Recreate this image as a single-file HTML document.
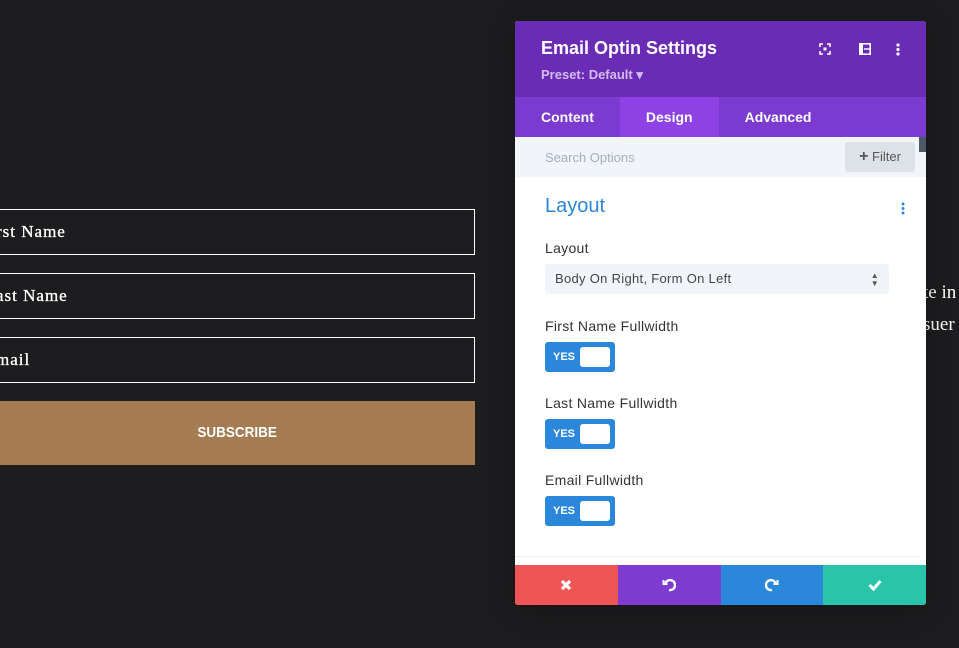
<!DOCTYPE html>
<html><head><style>
*{margin:0;padding:0;box-sizing:border-box}
body{width:959px;height:648px;background:#1d1d1f;overflow:hidden;position:relative;font-family:"Liberation Sans",sans-serif}
.inp{position:absolute;left:-5px;width:480px;height:46px;border:1px solid #fff;color:#fff;font-family:"Liberation Serif",serif;font-size:17px;letter-spacing:1px;padding:12px 0 0 0;-webkit-text-stroke:.3px #fff}
.sub{position:absolute;left:0;top:401px;width:475px;height:64px;background:#a57c52;color:#fff;font-weight:bold;font-size:15px;text-align:center;line-height:64px}
.rt{position:absolute;left:923px;color:#fff;font-family:"Liberation Serif",serif;font-size:19px}
.panel{position:absolute;left:515px;top:21px;width:411px;height:584px;background:#fff;border-radius:3px;overflow:hidden;box-shadow:0 5px 30px rgba(0,0,0,.3)}
.hd{height:76px;background:#6a2bb5;color:#fff;position:relative}
.hd h1{position:absolute;left:26px;top:17px;font-size:18px;font-weight:bold}
.hd .ps{position:absolute;left:26px;top:46px;font-size:13px;font-weight:bold;color:#d3bdf0}
.tabs{height:40px;background:#7b3bd0;display:flex;color:#fff;font-weight:bold;font-size:14px}
.tabs div{line-height:40px;padding:0 26px}
.tabs .a{background:#8e42e6}
.srch{height:40px;background:#f1f4f8;position:relative;color:#a3afbd;font-size:13px}
.lab{position:absolute;left:30px;color:#333;font-size:14px;letter-spacing:.3px}
.tog{position:absolute;left:30px;width:70px;height:30px;background:#2b87da;border-radius:3px;color:#fff;font-size:11px;font-weight:bold}
.tog span{position:absolute;left:8px;top:9px}
.tog i{position:absolute;left:35px;top:5px;width:30px;height:20px;background:#fff;border-radius:3px}
.ft{position:absolute;top:544px;left:0;width:411px;height:40px;display:flex}
.ft div{flex:1;display:flex;align-items:center;justify-content:center}
</style></head><body>
<div class="inp" style="top:209px">rst Name</div>
<div class="inp" style="top:273px">ast Name</div>
<div class="inp" style="top:337px">mail</div>
<div class="sub"><span style="display:inline-block;transform:scaleX(.9)">SUBSCRIBE</span></div>
<div class="rt" style="top:282px">te in</div>
<div class="rt" style="top:314px">suer</div>
<div class="panel">
 <div class="hd"><h1>Email Optin Settings</h1><div class="ps">Preset: Default ▾</div>
  <svg style="position:absolute;left:304px;top:22px" width="12" height="12" viewBox="0 0 12 12" fill="none" stroke="#fff" stroke-width="1.6"><path d="M1 4V1h3M8 1h3v3M11 8v3H8M4 11H1V8"/><rect x="4.5" y="4.5" width="3" height="3" fill="#fff" stroke="none"/></svg>
  <svg style="position:absolute;left:344px;top:22px" width="12" height="12" viewBox="0 0 12 12"><rect x="0.8" y="0.8" width="10.4" height="10.4" fill="none" stroke="#fff" stroke-width="1.6"/><rect x="0" y="0" width="4" height="12" fill="#fff"/><rect x="5" y="5.3" width="6" height="1.4" fill="#fff"/></svg>
  <svg style="position:absolute;left:381px;top:22px" width="4" height="13"><circle cx="2" cy="2" r="1.6" fill="#fff"/><circle cx="2" cy="6.5" r="1.6" fill="#fff"/><circle cx="2" cy="11" r="1.6" fill="#fff"/></svg>
 </div>
 <div class="tabs"><div>Content</div><div class="a">Design</div><div>Advanced</div></div>
 <div class="srch"><span style="position:absolute;left:30px;top:13px">Search Options</span>
  <div style="position:absolute;left:330px;top:5px;width:70px;height:30px;background:#dde2e8;border-radius:3px;color:#555;line-height:30px;text-align:center;font-size:13px"><b style="font-size:16px">+</b> Filter</div>
  <div style="position:absolute;left:404px;top:0;width:7px;height:15px;background:#4c5866"></div></div>
 <div style="position:absolute;left:30px;top:174px;font-size:20px;color:#2b87da">Layout</div>
 <svg style="position:absolute;left:386px;top:181px" width="4" height="13"><circle cx="2" cy="2" r="1.5" fill="#2b87da"/><circle cx="2" cy="6.5" r="1.5" fill="#2b87da"/><circle cx="2" cy="11" r="1.5" fill="#2b87da"/></svg>
 <div class="lab" style="top:219px">Layout</div>
 <div style="position:absolute;left:30px;top:243px;width:344px;height:30px;background:#f1f4f8;border-radius:3px;color:#444;font-size:13px;line-height:30px;padding-left:10px;letter-spacing:.3px">Body On Right, Form On Left<span style="position:absolute;right:10px;font-size:8px;line-height:8px;top:8px;color:#555">▲<br>▼</span></div>
 <div class="lab" style="top:297px">First Name Fullwidth</div>
 <div class="tog" style="top:321px"><span>YES</span><i></i></div>
 <div class="lab" style="top:374px">Last Name Fullwidth</div>
 <div class="tog" style="top:398px"><span>YES</span><i></i></div>
 <div class="lab" style="top:451px">Email Fullwidth</div>
 <div class="tog" style="top:475px"><span>YES</span><i></i></div>
 <div style="position:absolute;left:0;top:535px;width:404px;height:1px;background:#eef0f4"></div>
 <div class="ft">
  <div style="background:#ef5555"><svg width="12" height="12" viewBox="0 0 12 12"><path d="M2 2L10 10M10 2L2 10" stroke="#fff" stroke-width="3.2"/></svg></div>
  <div style="background:#7e3bd0"><svg width="14" height="14" viewBox="0 0 14 14" fill="none" stroke="#fff" stroke-width="2.4"><path d="M3.5 5A5 5 0 1 1 7 12"/><path d="M1.5 2v4h4" stroke-width="2"/></svg></div>
  <div style="background:#2b87da"><svg width="14" height="14" viewBox="0 0 14 14" fill="none" stroke="#fff" stroke-width="2.4"><path d="M10.5 5A5 5 0 1 0 7 12"/><path d="M12.5 2v4h-4" stroke-width="2"/></svg></div>
  <div style="background:#29c4a9"><svg width="14" height="12" viewBox="0 0 14 12"><path d="M1.5 6L5.5 10L12.5 2" fill="none" stroke="#fff" stroke-width="3"/></svg></div>
 </div>
</div>
</body></html>
